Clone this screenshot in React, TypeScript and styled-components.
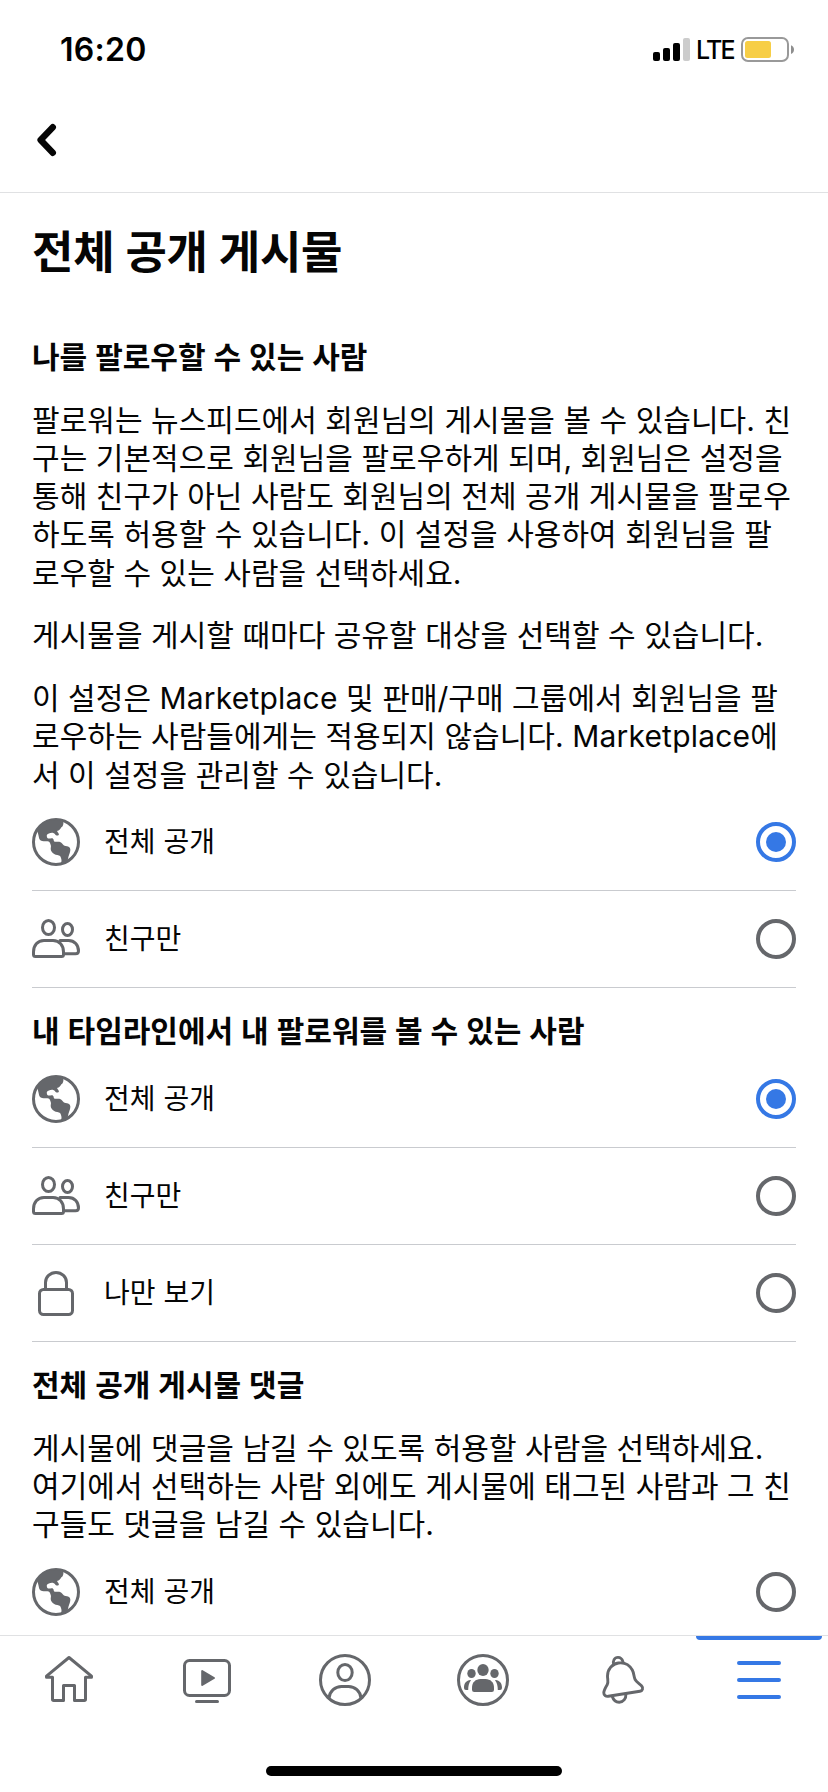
import React from "react";
import styled, { createGlobalStyle } from "styled-components";

const GREY = "#65676b";
const BLUE = "#3578e5";

const GlobalStyle = createGlobalStyle`
  * { box-sizing: border-box; }
  body {
    margin: 0;
    background: #fff;
    color: #050505;
    font-family: Inter, "Noto Sans CJK KR", sans-serif;
  }
`;

const Screen = styled.div`
  display: flex;
  flex-direction: column;
  width: 828px;
  height: 1792px;
  overflow: hidden;
  background: #fff;
`;

const StatusBar = styled.header`
  display: flex;
  align-items: center;
  justify-content: space-between;
  height: 88px;
  padding: 11px 33px 0 60px;
  color: #000;
`;

const Clock = styled.span`
  font-size: 32px;
  line-height: 40px;
  font-weight: 600;
  letter-spacing: 0.3px;
`;

const StatusIcons = styled.div`
  display: flex;
  align-items: center;
`;

const Carrier = styled.span`
  margin: 0 7px 0 5px;
  width: 38px;
  font-size: 25px;
  line-height: 30px;
  font-weight: 500;
  letter-spacing: -1.8px;
`;

const NavBar = styled.nav`
  display: flex;
  align-items: center;
  height: 105px;
  padding-left: 32px;
  border-bottom: 1px solid #e0e1e3;
`;

const BackButton = styled.button`
  display: flex;
  padding: 0;
  border: 0;
  background: none;
`;

const Content = styled.main`
  flex: 1;
  min-height: 0;
  overflow: hidden;
  padding: 32px 32px 0;
`;

const Title = styled.h1`
  margin: 0 0 56.9px;
  font-size: 45px;
  line-height: 56px;
  font-weight: 600;
  letter-spacing: -0.25px;
`;

const Section = styled.section`
  margin-bottom: 24.7px;
`;

const SectionTitle = styled.h2`
  margin: 0;
  font-size: 30px;
  line-height: 38.2px;
  font-weight: 600;
  word-spacing: 0.4px;
  white-space: nowrap;
`;

const Paragraph = styled.p`
  margin: 24.6px 0 0;
  font-size: 30px;
  line-height: 38.2px;
  letter-spacing: 0.04px;
  white-space: nowrap;
`;

const Latin = styled.span`
  letter-spacing: 0.2px;
`;

const Option = styled.label`
  display: flex;
  align-items: center;
  height: 97px;
  border-bottom: 1px solid #c9cbcf;
`;

const OptionLabel = styled.span`
  flex: 1;
  margin-left: 24px;
  font-size: 28px;
  line-height: 40px;
`;

const Radio = styled.span<{ $checked?: boolean }>`
  display: flex;
  align-items: center;
  justify-content: center;
  width: 40px;
  height: 40px;
  border: 4px solid ${(p) => (p.$checked ? BLUE : GREY)};
  border-radius: 50%;

  &::after {
    content: "";
    width: 20px;
    height: 20px;
    border-radius: 50%;
    background: ${(p) => (p.$checked ? BLUE : "transparent")};
  }
`;

const TabBar = styled.footer`
  display: grid;
  grid-template-columns: repeat(6, 1fr);
  height: 89px;
  border-top: 1px solid #e0e1e3;
`;

const Tab = styled.button<{ $active?: boolean }>`
  position: relative;
  display: flex;
  align-items: center;
  justify-content: center;
  padding: 0;
  border: 0;
  background: none;
  color: ${(p) => (p.$active ? BLUE : GREY)};

  &::before {
    content: "";
    display: ${(p) => (p.$active ? "block" : "none")};
    position: absolute;
    top: 0;
    left: 6px;
    right: 6px;
    height: 4px;
    border-radius: 0 0 4px 4px;
    background: ${BLUE};
  }
`;

const HomeArea = styled.div`
  display: flex;
  justify-content: center;
  height: 68px;
  padding-top: 42px;
`;

const HomeIndicator = styled.div`
  width: 296px;
  height: 10px;
  border-radius: 5px;
  background: #000;
`;

const Signal = () => (
  <svg width="38" height="26" viewBox="0 0 38 26">
    <rect x="0" y="15" width="7" height="9" rx="2" />
    <rect x="10" y="11" width="7" height="13" rx="2" />
    <rect x="20" y="6" width="7" height="18" rx="2" />
    <rect x="30" y="1" width="7" height="23" rx="2" fill="#ccc" />
  </svg>
);

const Battery = () => (
  <svg width="54" height="26" viewBox="0 0 54 26">
    <rect x="1" y="1" width="46" height="23" rx="6" fill="none" stroke="#999" strokeWidth="2" />
    <rect x="4" y="4" width="26" height="17" rx="2.5" fill="#f7ce46" />
    <path d="M50 8.200c4 1.600 4 7.200 0 8.800z" fill="#8e8e8e" />
  </svg>
);

const BackIcon = () => (
  <svg width="32" height="40" viewBox="0 0 32 40" fill="none" stroke="#050505" strokeWidth="6.400" strokeLinecap="round" strokeLinejoin="round">
    <path d="M20.800 7.200 8.600 20l12.200 12.800" />
  </svg>
);

const Globe = () => (
  <svg width="48" height="48" viewBox="0 0 48 48" fill={GREY}>
    <circle cx="24" cy="24" r="22.500" fill="none" stroke={GREY} strokeWidth="3" />
    <path d="M31 3.400c.6 1.500.5 2.700-.1 4-.4 1-1 1.300-1.700 2.200-.7 1-1 2-2.200 2.600-.7.400-1.700.3-1.800 1 0 .8 1.600 1.800 1.700 3 .1 1.200-1.300 1.500-2.400 1.200-1.400-.4-1.500-2.100-3.200-2.400-1.400-.3-3-.1-4.400.5-1.500.6-2.300 1.500-2.100 2.600.2 1 .1 1.700.9 2.200 1.500.8 3.600-.6 5.100.2 1.400.8.4 2.600 1.800 3.200 1.200.5 3.100-.4 4.800.1 2.700.8 3 2.800 4.600 3.700 1.700.9 4.600.6 5.800 2.200 1.200 1.700.2 4.700-.7 7.100-1.100 2.900-.9 5.500-2.400 7.500l-5.300 1.300c-.4-1.500.5-3-.1-4.700-.6-1.800-.6-2.800-2.300-3.500-2.200-.8-4.500-.7-6.200-2.500-1.300-1.300-2.100-2.600-2.100-4.200 0-1.500.6-2.400 0-3.800-.6-1.300-.7-2.700-2.100-3.300-2.200-1-5.700.5-7.900-1-1.700-1.200-1.800-3.500-2.300-5.600-.6-2.500-1.100-4.200.2-7.100C9 5.500 18 0 31 3.400Z" />
  </svg>
);

const Friends = () => (
  <svg width="48" height="48" viewBox="0 0 48 48" fill="none" stroke={GREY} strokeWidth="3" strokeLinecap="round" strokeLinejoin="round">
    <ellipse cx="16.500" cy="12.500" rx="6" ry="7" />
    <ellipse cx="35.500" cy="14.500" rx="5" ry="6" />
    <path d="M12 25.500h9c6.500 0 10.500 5 10.500 11.500v2.500q0 2-2 2h-26q-2 0-2-2V37c0-6.500 4-11.500 10.500-11.500Z" />
    <path d="M28 25.500h8.500c6 0 10 4.500 10 10.500 0 2-1.200 2.700-3 2.700H32" />
  </svg>
);

const Lock = () => (
  <svg width="48" height="48" viewBox="0 0 48 48" fill="none" stroke={GREY} strokeWidth="3">
    <rect x="7.500" y="20.500" width="33" height="25" rx="4" />
    <path d="M13.500 20.500v-7a10.500 10 0 0 1 21 0v7" />
  </svg>
);

const TabSvg = styled.svg.attrs({
  viewBox: "0 0 56 56",
  fill: "none",
  stroke: "currentColor",
  strokeLinecap: "round",
  strokeLinejoin: "round",
})<{ $weight?: number }>`
  width: 56px;
  height: 56px;
  stroke-width: ${(p) => p.$weight ?? 3};
`;

const HomeIcon = () => (
  <TabSvg>
    <path d="M28 5.500 5.500 24.200v1.100H11.500v22q0 1.200 1.200 1.200H22.500v-15h11v15h9.800q1.200 0 1.200-1.200v-22h6v-1.100Z" />
  </TabSvg>
);

const WatchIcon = () => (
  <TabSvg>
    <rect x="5.500" y="8.500" width="45" height="35" rx="5" />
    <path d="M17.500 49.500h21" />
    <path d="M23.200 19v14L35 26Z" fill="currentColor" strokeWidth="2" />
  </TabSvg>
);

const ProfileIcon = () => (
  <TabSvg>
    <circle cx="28" cy="28" r="24.500" />
    <ellipse cx="28" cy="20.500" rx="7.200" ry="8" />
    <path d="M12 46c.8-6.800 6-11.500 12.500-11.500h7c6.500 0 11.700 4.700 12.500 11.500" />
  </TabSvg>
);

const GroupsIcon = () => (
  <TabSvg>
    <circle cx="28" cy="28" r="24.500" />
    <g fill="currentColor" stroke="none">
      <ellipse cx="28" cy="18" rx="5.700" ry="6.100" />
      <ellipse cx="16.500" cy="21.500" rx="4.200" ry="4.600" />
      <ellipse cx="39.500" cy="21.500" rx="4.200" ry="4.600" />
      <path d="M25.500 27h5c5 0 8.500 3.500 8.500 8.500v2.300q0 2.200-2.200 2.200H19.200Q17 40 17 37.800v-2.300c0-5 3.500-8.500 8.500-8.500Z" />
      <path d="M15.300 28c-3.800.4-6.300 3.200-6.300 7.500 0 1.700.7 2.500 2 2.500h2.200c0-4 .7-7 2.600-9.500.3-.3 0-.5-.5-.5Z" />
      <path d="M40.700 28c3.800.4 6.300 3.200 6.300 7.500 0 1.700-.7 2.500-2 2.500h-2.200c0-4-.7-7-2.600-9.500-.3-.3 0-.5.500-.5Z" />
    </g>
  </TabSvg>
);

const BellIcon = () => (
  <TabSvg $weight={2.9}>
    <path d="M25.400 11C19 12 14.500 17.500 14.500 24c0 3.300 1.200 6.200-.3 8.700-1.700 2.800-3.400 5.300-3.400 8.100 0 2.500 2 3.900 4.500 3.500l31.600-5c2.700-.4 3.600-3.200 1.800-5.300-1.800-2.200-5-3.600-6.600-6.500-1.400-2.600-1-6.300-2.800-9.500C36.500 12.900 31.300 10.200 25.400 11Z" />
    <path d="M20.700 12.800c-1.200-4 .7-7.400 4.300-7.400 2.700 0 4.200 1.800 5 4.500" />
    <path d="M19.200 44.200c1.200 3.800 3.700 6 7 6 4 0 7-3.500 6.700-8.200" />
  </TabSvg>
);

const MenuIcon = () => (
  <TabSvg $weight={4}>
    <path d="M8 11h40M8 28h40M8 45h40" />
  </TabSvg>
);

const ICONS = { public: Globe, friends: Friends, me: Lock };

interface OptionRowProps {
  icon: keyof typeof ICONS;
  label: string;
  checked?: boolean;
}

const OptionRow = ({ icon, label, checked }: OptionRowProps) => {
  const Icon = ICONS[icon];
  return (
    <Option>
      <Icon />
      <OptionLabel>{label}</OptionLabel>
      <Radio $checked={checked} role="radio" aria-checked={!!checked} />
    </Option>
  );
};

export default function App() {
  return (
    <Screen>
      <GlobalStyle />
      <StatusBar>
        <Clock>16:20</Clock>
        <StatusIcons>
          <Signal />
          <Carrier>LTE</Carrier>
          <Battery />
        </StatusIcons>
      </StatusBar>
      <NavBar>
        <BackButton aria-label="뒤로">
          <BackIcon />
        </BackButton>
      </NavBar>
      <Content>
        <Title>전체 공개 게시물</Title>
        <Section>
          <SectionTitle>나를 팔로우할 수 있는 사람</SectionTitle>
          <Paragraph>
            팔로워는 뉴스피드에서 회원님의 게시물을 볼 수 있습니다. 친<br />
            구는 기본적으로 회원님을 팔로우하게 되며, 회원님은 설정을<br />
            통해 친구가 아닌 사람도 회원님의 전체 공개 게시물을 팔로우<br />
            하도록 허용할 수 있습니다. 이 설정을 사용하여 회원님을 팔<br />
            로우할 수 있는 사람을 선택하세요.
          </Paragraph>
          <Paragraph>게시물을 게시할 때마다 공유할 대상을 선택할 수 있습니다.</Paragraph>
          <Paragraph>
            이 설정은 <Latin>Marketplace</Latin> 및 판매/구매 그룹에서 회원님을 팔<br />
            로우하는 사람들에게는 적용되지 않습니다. <Latin>Marketplace</Latin>에<br />
            서 이 설정을 관리할 수 있습니다.
          </Paragraph>
          <OptionRow icon="public" label="전체 공개" checked />
          <OptionRow icon="friends" label="친구만" />
        </Section>
        <Section>
          <SectionTitle>내 타임라인에서 내 팔로워를 볼 수 있는 사람</SectionTitle>
          <OptionRow icon="public" label="전체 공개" checked />
          <OptionRow icon="friends" label="친구만" />
          <OptionRow icon="me" label="나만 보기" />
        </Section>
        <Section>
          <SectionTitle>전체 공개 게시물 댓글</SectionTitle>
          <Paragraph>
            게시물에 댓글을 남길 수 있도록 허용할 사람을 선택하세요.<br />
            여기에서 선택하는 사람 외에도 게시물에 태그된 사람과 그 친<br />
            구들도 댓글을 남길 수 있습니다.
          </Paragraph>
          <OptionRow icon="public" label="전체 공개" />
        </Section>
      </Content>
      <TabBar>
        <Tab aria-label="홈"><HomeIcon /></Tab>
        <Tab aria-label="Watch"><WatchIcon /></Tab>
        <Tab aria-label="프로필"><ProfileIcon /></Tab>
        <Tab aria-label="그룹"><GroupsIcon /></Tab>
        <Tab aria-label="알림"><BellIcon /></Tab>
        <Tab aria-label="메뉴" $active><MenuIcon /></Tab>
      </TabBar>
      <HomeArea>
        <HomeIndicator />
      </HomeArea>
    </Screen>
  );
}
